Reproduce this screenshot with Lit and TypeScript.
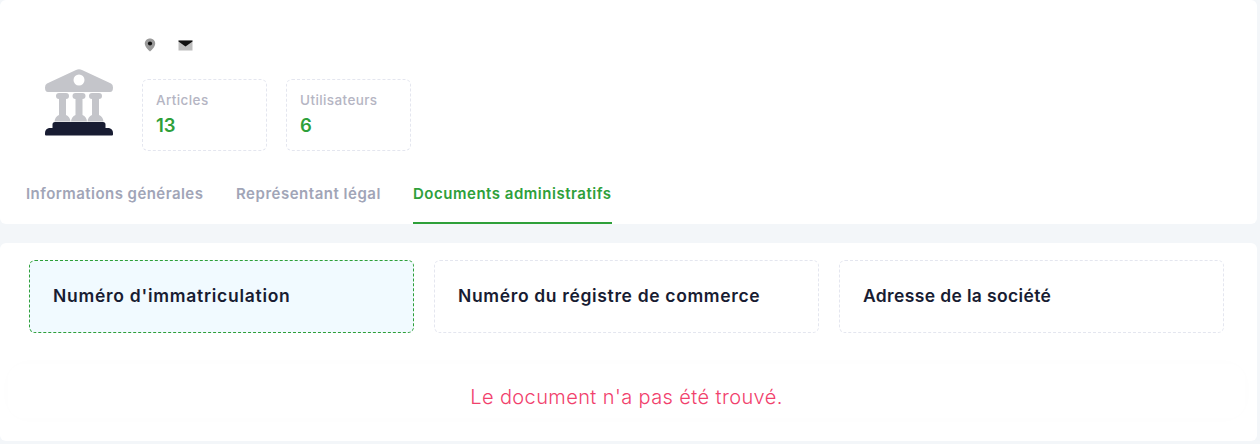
import { LitElement, html, css } from "lit";
import { customElement } from "lit/decorators.js";

const COLUMN = "M14 24 h7 a3 3 0 0 1 0 6 h0 V46 q4 1.500 4.500 6.500 H9.500 q0.500-5 4.500-6.500 V30 a3 3 0 0 1 0-6 Z";

@customElement("app-root")
export class AppRoot extends LitElement {
  static styles = css`
    :host { display: block; width: 1260px; height: 444px; background: #f3f6f9; font-family: Inter, "Liberation Sans", sans-serif; overflow: hidden; }
    .card { width: 1257px; background: #fff; box-sizing: border-box; }
    .top { height: 224px; border-radius: 6px; padding: 0 0 0 26px; display: flex; flex-direction: column; }
    .head { display: flex; height: 151px; }
    .logo { width: 116px; flex: none; display: flex; padding: 69px 0 0 19px; box-sizing: border-box; }
    .logo svg { width: 68px; height: 68px; }
    .info { display: flex; flex-direction: column; }
    .links { display: flex; height: 79px; box-sizing: border-box; padding: 38px 0 0 2px; gap: 22px; align-items: flex-start; }
    .links svg { display: block; flex: none; }
    .links .mail { margin-top: 2px; }
    .stats { display: flex; gap: 19px; }
    .stat { width: 125px; height: 72px; box-sizing: border-box; border: 1px dashed #e4e6ef; border-radius: 6px; padding: 11px 13px; }
    .stat .l { font-size: 13.5px; letter-spacing: 0.4px; font-weight: 500; color: #b5b5c3; line-height: 18px; }
    .stat .v { font-size: 18.5px; font-weight: 600; color: #2ea03a; line-height: 28px; margin-top: 2px; }
    .tabs { display: flex; gap: 33px; margin-top: 23px; }
    .tab { height: 50px; box-sizing: border-box; padding-top: 11px; font-size: 15px; letter-spacing: 0.52px; font-weight: 600; line-height: 18px; color: #a1a5b7; white-space: nowrap; }
    .tab.on { color: #2ea03a; border-bottom: 2px solid #2ea03a; }
    .t1 { width: 177px; letter-spacing: 0.45px; } .t2 { width: 144px; } .t3 { width: 199px; }
    .bottom { height: 198px; margin-top: 19px; border-radius: 6px; padding: 17px 0 0 29px; }
    .docs { display: flex; gap: 20px; }
    .doc { width: 385px; height: 73px; box-sizing: border-box; border: 1px dashed #e4e6ef; border-radius: 6px; padding: 0 0 2px 23px; display: flex; align-items: center; font-size: 17.5px; letter-spacing: 0.65px; font-weight: 600; color: #181c32; white-space: nowrap; }
    .doc.on { border-color: #2ea03a; background: #f1faff; letter-spacing: 0.73px; }
    .doc.d3 { letter-spacing: 0.36px; }
    .msg { margin: 31px 0 0 -21px; width: 1237px; height: 54px; box-sizing: border-box; border-radius: 16px; box-shadow: 0 0 20px rgba(0, 0, 0, 0.012); display: flex; align-items: center; justify-content: center; padding: 11px 0 0 0; font-size: 20px; letter-spacing: 0.4px; font-weight: 300; color: #f1416c; white-space: nowrap; }
  `;

  render() {
    return html`
      <div class="card top">
        <div class="head">
          <div class="logo">
            <svg viewBox="0 0 68 68">
              <path fill="#c4c5ca" d="M31 1 a7 7 0 0 1 6 0 L66 14.500 q2 1 2 4 q0 4.500-3 4.500 H3 q-3 0-3-4.500 q0-3 2-4 Z" />
              <circle cx="34" cy="11" r="5.500" fill="#fff" />
              <path fill="#c4c5ca" d=${COLUMN} />
              <path fill="#c4c5ca" transform="translate(16.500 0)" d=${COLUMN} />
              <path fill="#c4c5ca" transform="translate(33 0)" d=${COLUMN} />
              <path fill="#181c32" d="M10 53 q-2.500 0-2.500 2.500 V59 H4 q-4 1-4 5 v1.500 q0 1 1 1 H67 q1 0 1-1 V64 q0-4-4-5 H60.500 V55.500 q0-2.500-2.500-2.500 Z" />
            </svg>
          </div>
          <div class="info">
            <div class="links">
              <svg width="12" height="14" viewBox="0 0 12 14">
                <path fill="#9a9a9a" d="M6 0.500 C9 0.500 11.200 2.700 11.200 5.500 C11.200 8.500 8 11.800 6 13.500 C4 11.800 0.800 8.500 0.800 5.500 C0.800 2.700 3 0.500 6 0.500 Z" />
                <circle cx="6" cy="5.500" r="2.100" fill="#111" />
              </svg>
              <svg class="mail" width="15" height="11" viewBox="0 0 15 11">
                <rect x="0.500" y="0.500" width="14" height="10" fill="#bdbdbd" />
                <path fill="#111" d="M0.500 0.500 H14.500 V1.500 L7.500 6.500 L0.500 1.500 Z" />
              </svg>
            </div>
            <div class="stats">
              <div class="stat"><div class="l">Articles</div><div class="v">13</div></div>
              <div class="stat"><div class="l">Utilisateurs</div><div class="v">6</div></div>
            </div>
          </div>
        </div>
        <div class="tabs">
          <div class="tab t1">Informations générales</div>
          <div class="tab t2">Représentant légal</div>
          <div class="tab t3 on">Documents administratifs</div>
        </div>
      </div>
      <div class="card bottom">
        <div class="docs">
          <div class="doc on">Numéro d'immatriculation</div>
          <div class="doc">Numéro du régistre de commerce</div>
          <div class="doc d3">Adresse de la société</div>
        </div>
        <div class="msg">Le document n'a pas été trouvé.</div>
      </div>
    `;
  }
}
